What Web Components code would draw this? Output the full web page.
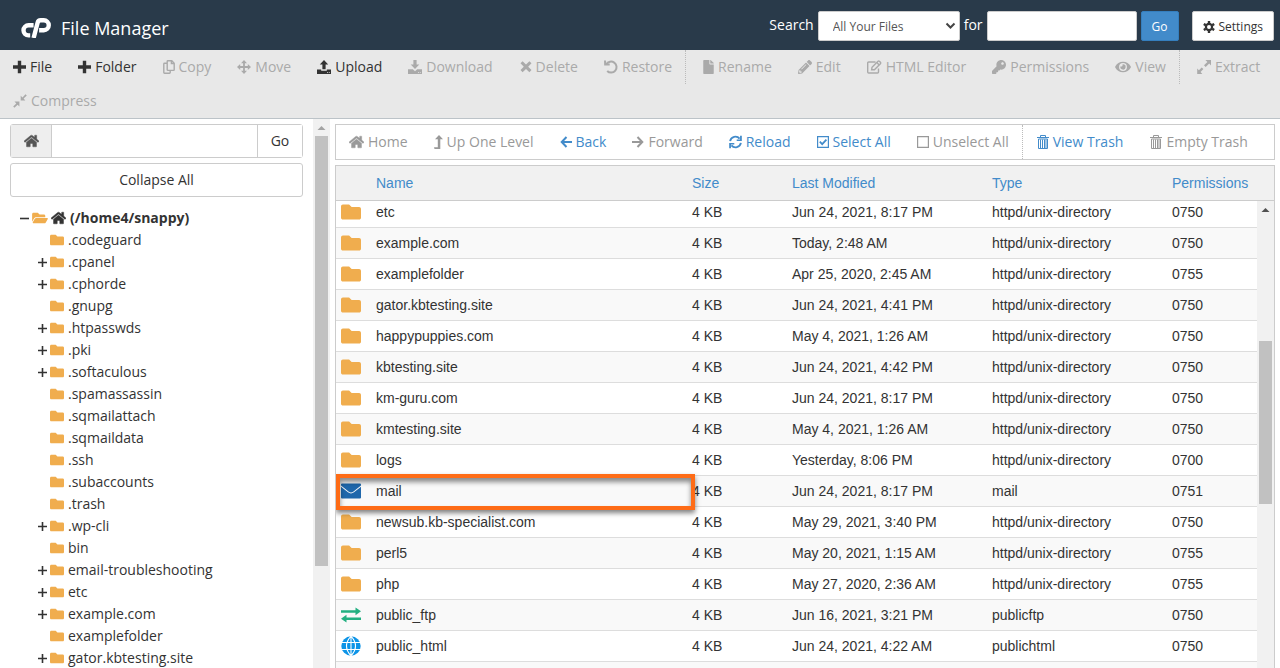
<!DOCTYPE html>
<html lang="en">
<head>
<meta charset="utf-8">
<title>File Manager</title>
<style>
  html, body { height: 100%; }
  body {
    margin: 0;
    overflow: hidden;
    background: #fff;
    color: #333;
    font: 14px/20px "Open Sans", sans-serif;
  }
</style>
</head>
<body>
<file-manager>
  <fm-header slot="header"></fm-header>
  <action-bar slot="actions" label="File actions">
    <tool-item icon="plus">File</tool-item>
    <tool-item icon="plus">Folder</tool-item>
    <tool-item icon="copy" disabled>Copy</tool-item>
    <tool-item icon="move" disabled>Move</tool-item>
    <tool-item icon="upload">Upload</tool-item>
    <tool-item icon="download" disabled>Download</tool-item>
    <tool-item icon="times" disabled>Delete</tool-item>
    <tool-item icon="undo" disabled divider>Restore</tool-item>
    <tool-item icon="file" disabled>Rename</tool-item>
    <tool-item icon="pencil" disabled>Edit</tool-item>
    <tool-item icon="edit" disabled>HTML Editor</tool-item>
    <tool-item icon="key" disabled>Permissions</tool-item>
    <tool-item icon="eye" disabled divider>View</tool-item>
    <tool-item icon="expand" disabled>Extract</tool-item>
    <tool-item icon="compress" disabled>Compress</tool-item>
  </action-bar>
  <folder-tree slot="tree"></folder-tree>
  <action-bar slot="nav" label="Navigation" boxed>
    <tool-item icon="home" disabled>Home</tool-item>
    <tool-item icon="level-up" disabled>Up One Level</tool-item>
    <tool-item icon="arrow-left" link>Back</tool-item>
    <tool-item icon="arrow-right" disabled>Forward</tool-item>
    <tool-item icon="sync" link>Reload</tool-item>
    <tool-item icon="check-square" link>Select All</tool-item>
    <tool-item icon="square" disabled divider>Unselect All</tool-item>
    <tool-item icon="trash" link>View Trash</tool-item>
    <tool-item icon="trash" disabled>Empty Trash</tool-item>
  </action-bar>
  <file-table slot="files"></file-table>
</file-manager>

<script>
// name: [width, height, viewBox, markup]
const ICONS = {
  "plus": [13, 14, "0 0 13 14", '<path d="M4.8.8h3.4v4.500h4.800v3.400H8.200v4.500H4.800V8.700H0V5.300h4.800z"/>'],
  "copy": [12, 14, "0 0 12 14", '<path d="M4.200 3.200H1.500Q.8 3.200.8 3.900v8.600q0 .7.7.7h5q.7 0 .7-.7v-2M4.800.8h4l2.400 2.400v6.500q0 .7-.7.7H4.900q-.7 0-.7-.7V1.500q0-.7.6-.7zM8.400.8v2.800h2.800" fill="none" stroke="currentColor" stroke-width="1.400"/>'],
  "move": [14, 14, "0 0 14 14", '<path d="M7 0l3 3.200H7.900v2.900h2.900V4L14 7l-3.200 3V7.900H7.900v2.900H10L7 14l-3-3.200h2.100V7.900H3.200V10L0 7l3.200-3v2.100h2.900V3.200H4z"/>'],
  "upload": [14, 14, "0 0 14 14", '<path d="M7 0l4.200 4.500H8.600v4.700H5.400V4.500H2.800zM0 9.500h4.200v1.200h5.600V9.500H14V14H0zM10 12v.8h1V12zm1.800 0v.8h1V12z" fill-rule="evenodd"/>'],
  "download": [14, 14, "0 0 14 14", '<path d="M5.400 0h3.200v4.500h2.700L7 9 2.700 4.500h2.700zM0 9.300h4.800L7 11.300l2.200-2H14V14H0zM10 12v.8h1V12zm1.800 0v.8h1V12z" fill-rule="evenodd"/>'],
  "times": [13, 14, "0 0 13 14", '<path d="M3.600 1.200L7 4.500l3.400-3.300 2.100 2.100-3.300 3.400 3.300 3.400-2.100 2.100L7 8.900l-3.400 3.300-2.100-2.100 3.300-3.400-3.300-3.400z"/>'],
  "undo": [14, 14, "0 0 14 14", '<path d="M2.300 4.300A5.500 5.500 0 1 1 3.200 11" fill="none" stroke="currentColor" stroke-width="2"/><path d="M0 .4l2 .1.200 3h3.500v2H.2z"/>'],
  "file": [11, 14, "0 0 384 512", '<path d="M224 136V0H24C10.700 0 0 10.700 0 24v464c0 13.300 10.700 24 24 24h336c13.300 0 24-10.700 24-24V160H248c-13.200 0-24-10.800-24-24zm160-14.100v6.100H256V0h6.100c6.400 0 12.500 2.500 17 7l97.900 98c4.500 4.500 7 10.600 7 16.900z"/>'],
  "pencil": [14, 14, "0 0 512 512", '<path d="M497.900 142.100l-46.100 46.100c-4.700 4.700-12.300 4.700-17 0l-111-111c-4.700-4.700-4.700-12.300 0-17l46.100-46.100c18.700-18.700 49.100-18.700 67.900 0l60.100 60.100c18.800 18.700 18.800 49.100 0 67.900zM284.200 99.800L21.600 362.400.4 483.900c-2.900 16.400 11.400 30.600 27.800 27.800l121.500-21.300 262.600-262.600c4.700-4.700 4.700-12.300 0-17l-111-111c-4.800-4.700-12.400-4.700-17.100 0zM124.100 339.900c-5.500-5.500-5.500-14.300 0-19.800l154-154c5.500-5.500 14.300-5.500 19.800 0s5.500 14.300 0 19.800l-154 154c-5.500 5.500-14.300 5.500-19.800 0zM88 424h48v36.300l-64.500 11.300-31.100-31.100L51.700 376H88v48z"/>'],
  "edit": [15, 14, "0 0 15 14", '<path d="M8.500 2H1.700q-1 0-1 1v9q0 1 1 1h8.800q1 0 1-1V8.500M4.600 9.800l.4-2.500 6-6q.7-.6 1.400 0l1 1q.6.700 0 1.400l-6 6zM9.800 2.500l2.400 2.400" fill="none" stroke="currentColor" stroke-width="1.400"/>'],
  "key": [14, 14, "0 0 512 512", '<path d="M512 176C512 273.200 433.200 352 336 352c-11.200 0-22.200-1.100-32.800-3.100l-24 27A24 24 0 0 1 261.200 384H224v40c0 13.300-10.700 24-24 24h-40v40c0 13.300-10.700 24-24 24H24c-13.300 0-24-10.700-24-24v-78c0-6.400 2.500-12.500 7-17l161.800-161.800C163.100 213.800 160 195.300 160 176 160 78.800 238.800 0 336 0c97.500 0 176 78.500 176 176zM336 128c0 26.500 21.500 48 48 48s48-21.500 48-48-21.500-48-48-48-48 21.500-48 48z"/>'],
  "eye": [16, 14, "0 0 576 512", '<path d="M572.500 241.400C518.300 135.600 410.900 64 288 64S57.700 135.600 3.500 241.400a32.400 32.400 0 0 0 0 29.200C57.700 376.400 165.100 448 288 448s230.300-71.600 284.500-177.400a32.400 32.400 0 0 0 0-29.200zM288 400a144 144 0 1 1 144-144 143.900 143.900 0 0 1-144 144zm0-240a95.300 95.300 0 0 0-25.300 3.800 47.900 47.900 0 0 1-66.900 66.900A95.800 95.800 0 1 0 288 160z"/>'],
  "expand": [14, 14, "0 0 14 14", '<path d="M8.400 0H14v5.400l-1.800-1.800-3.500 3.300L7 5.200l3.400-3.300zM.2 8.500l1.700 1.700 2.800-2.800 1.700 1.700-2.800 2.800L5.300 14H.2z"/>'],
  "compress": [14, 14, "0 0 14 14", '<path d="M12.500.2l1.300 1.300-3.200 3 1.700 1.900H7.700V1.700l1.800 1.700zM1.500 7.600h4.900v4.800l-1.800-1.700-3.200 3.100L.2 12.600l3.100-3.200z"/>'],
  "home": [15, 14, "0 0 576 512", '<path d="M280.400 148.300L96 300.100V464a16 16 0 0 0 16 16l112.100-.3a16 16 0 0 0 15.900-16V368a16 16 0 0 1 16-16h64a16 16 0 0 1 16 16v95.600a16 16 0 0 0 16 16.100L464 480a16 16 0 0 0 16-16V300L295.700 148.300a12.200 12.200 0 0 0-15.300 0zM571.600 251.500L488 182.600V44.100a12 12 0 0 0-12-12h-56a12 12 0 0 0-12 12v72.600L318.500 43a48 48 0 0 0-61 0L4.300 251.500a12 12 0 0 0-1.600 16.900l25.500 31A12 12 0 0 0 45.200 301l235.200-193.700a12.200 12.200 0 0 1 15.300 0L530.900 301a12 12 0 0 0 16.900-1.600l25.500-31a12 12 0 0 0-1.700-16.900z" stroke="currentColor" stroke-width="16"/>'],
  "level-up": [9, 14, "0 0 9 14", '<path d="M5 0l4 4.300H6.300V14H.5L0 12.200h3.800V4.300H1z"/>'],
  "arrow-left": [12, 14, "0 0 12 14", '<path d="M6.500 2L1.700 7l4.800 5M2 7h10" fill="none" stroke="currentColor" stroke-width="2"/>'],
  "arrow-right": [12, 14, "0 0 12 14", '<path d="M5.500 2l4.800 5-4.800 5M10 7H0" fill="none" stroke="currentColor" stroke-width="2"/>'],
  "sync": [13, 14, "0 0 14 14", '<path d="M1.200 6A5.800 5.800 0 0 1 11.400 3.400M12.800 8A5.800 5.800 0 0 1 2.600 10.600" fill="none" stroke="currentColor" stroke-width="2"/><path d="M13.800.3v5.600H8.300V4.200h3.600V.3zM.2 13.700V8.100h5.500v1.700H2.100v3.900z"/>'],
  "check-square": [12, 14, "0 0 12 14", '<path d="M.6 1.600h10.800v10.800H.6z" fill="none" stroke="currentColor" stroke-width="1.200"/><path d="M2.800 6.700l2.400 2.400L9.400 4.700" fill="none" stroke="currentColor" stroke-width="1.800"/>'],
  "square": [12, 14, "0 0 12 14", '<path d="M.6 1.600h10.800v10.800H.6z" fill="none" stroke="currentColor" stroke-width="1.200"/>'],
  "trash": [13, 14, "0 0 13 14", '<path d="M1 2.500h12M4.500 2V.5h5V2M2.500 4v9.500h9V4zM4.500 4.500v8.500M6.500 4.500v8.500M8.500 4.500v8.500M10 4.500v8.500" fill="none" stroke="currentColor"/>'],
  "folder": [14, 14, "0 0 512 512", '<path d="M464 128H272l-64-64H48C21.500 64 0 85.500 0 112v288c0 26.500 21.500 48 48 48h416c26.500 0 48-21.500 48-48V176c0-26.500-21.500-48-48-48z"/>'],
  "folder-open": [16, 14, "0 0 576 512", '<path d="M572.700 292.100L500.300 416.200A64 64 0 0 1 445 448H45c-18.500 0-30-20.100-20.700-36.100l72.400-124.100A64 64 0 0 1 152 256h400c18.500 0 30 20.100 20.700 36.100zM152 224h328v-48c0-26.500-21.500-48-48-48H272l-64-64H48C21.500 64 0 85.500 0 112v278l69.100-118.400C86.200 242.300 118 224 152 224z"/>'],
  "tree-plus": [9, 14, "0 0 9 14", '<path d="M0 7.500h9M4.500 3v9" fill="none" stroke="currentColor" stroke-width="1.600"/>'],
  "tree-minus": [9, 14, "0 0 9 14", '<path d="M0 7.500h9" fill="none" stroke="currentColor" stroke-width="1.600"/>'],
  "cog": [12, 12, "0 0 12 12", '<circle cx="6" cy="6" r="3.100" fill="none" stroke="currentColor" stroke-width="2.200"/><path d="M6 0v2.200M6 9.800V12M.8 3l1.900 1.100M9.300 7.900L11.200 9M.8 9l1.900-1.100M9.300 4.100L11.200 3" stroke="currentColor" stroke-width="2.400"/>'],
  "big-folder": [20, 20, "0 0 512 512", '<path d="M464 128H272l-64-64H48C21.500 64 0 85.500 0 112v288c0 26.500 21.500 48 48 48h416c26.500 0 48-21.500 48-48V176c0-26.500-21.500-48-48-48z"/>'],
  "mail": [20, 20, "0 0 20 20", '<path d="M1 2.500h18q1 0 1 1v.9l-7.500 6q-2.500 2-5 0L0 4.400v-.9q0-1 1-1zM0 5.800l7 5.500q3 2.300 6 0l7-5.500v10.700q0 1-1 1H1q-1 0-1-1z"/>'],
  "exchange": [20, 20, "0 0 20 20", '<path d="M0 5.200h14.500V2.400L20 6.300l-5.500 3.900V7.700H0zM20 12.500H5.500V9.800L0 13.700l5.500 3.900v-2.600H20z"/>'],
  "globe": [20, 20, "0 0 20 20", '<circle cx="10" cy="10" r="9.700"/><path d="M0 6.500h20M0 13.500h20M10 0v20M10 .2Q1 10 10 19.800M10 .2Q19 10 10 19.800" fill="none" stroke="#fff" stroke-width="1.100"/>']
};

class FmIcon extends HTMLElement {
  constructor() {
    super();
    this.attachShadow({ mode: "open" });
  }

  connectedCallback() {
    const [width, height, box, body] = ICONS[this.getAttribute("name")];
    this.shadowRoot.innerHTML = `
      <style>
        :host { display: inline-flex; flex: none; }
        svg { display: block; fill: currentColor; }
      </style>
      <svg width="${width}" height="${height}" viewBox="${box}" aria-hidden="true">${body}</svg>
    `;
  }
}

class ToolItem extends HTMLElement {
  constructor() {
    super();
    this.attachShadow({ mode: "open" });
  }

  connectedCallback() {
    const disabled = this.hasAttribute("disabled") ? "disabled" : "";
    this.shadowRoot.innerHTML = `
      <style>
        :host { display: block; }
        :host([divider]) { border-right: 1px dotted #bbb; margin-right: 4px; }
        :host([boxed][divider]) { margin-right: 0; }
        button {
          display: flex;
          align-items: center;
          gap: 4px;
          height: 34px;
          padding: 0 13px;
          border: 0;
          background: none;
          color: #333;
          font: inherit;
          white-space: nowrap;
          cursor: pointer;
        }
        :host([link]) button { color: #428bca; }
        button:disabled { color: #aaa; cursor: default; }
        :host([boxed]) button:disabled { color: #999; }
      </style>
      <button type="button" ${disabled}>
        <fm-icon name="${this.getAttribute("icon")}"></fm-icon><slot></slot>
      </button>
    `;
  }
}

class ActionBar extends HTMLElement {
  constructor() {
    super();
    this.attachShadow({ mode: "open" });
  }

  connectedCallback() {
    this.setAttribute("role", "toolbar");
    this.setAttribute("aria-label", this.getAttribute("label"));
    this.shadowRoot.innerHTML = `
      <style>
        :host {
          display: flex;
          flex-wrap: wrap;
          background: #e8e8e8;
          border-bottom: 1px solid #bcc3c8;
        }
        :host([boxed]) { background: #fff; border: 1px solid #ccc; }
      </style>
      <slot></slot>
    `;
    if (this.hasAttribute("boxed")) {
      this.querySelectorAll("tool-item").forEach((item) => item.setAttribute("boxed", ""));
    }
  }
}

class FmHeader extends HTMLElement {
  constructor() {
    super();
    this.attachShadow({ mode: "open" });
  }

  connectedCallback() {
    this.shadowRoot.innerHTML = `
      <style>
        :host {
          display: flex;
          justify-content: space-between;
          height: 50px;
          padding: 0 6px 0 21px;
          background: #293a4a;
          color: #fff;
        }
        .brand { display: flex; align-items: center; gap: 10px; padding-top: 6px; }
        h1 { margin: 0; font-size: 18px; line-height: 24px; font-weight: 400; }
        form { display: flex; align-items: center; gap: 4px; padding-top: 2px; }
        label { padding-bottom: 2px; }
        select, input, button {
          box-sizing: border-box;
          height: 30px;
          border: 1px solid #ccc;
          border-radius: 2px;
          background: #fff;
          color: #333;
          font: 12px/18px "Open Sans", sans-serif;
        }
        .picker { display: grid; align-items: center; }
        .picker > * { grid-area: 1 / 1; }
        .picker svg { justify-self: end; margin-right: 4px; pointer-events: none; }
        select { width: 142px; padding: 2px 14px 0; color: #555; appearance: none; }
        input { width: 150px; padding: 4px 8px; }
        button { display: flex; align-items: center; gap: 4px; padding: 2px 10px 0; }
        .go { border-color: #357ebd; background: #428bca; color: #fff; }
        .settings { margin-left: 9px; }
      </style>
      <div class="brand">
        <svg width="30" height="20" viewBox="0 0 30 20" aria-hidden="true" fill="none" stroke="#fff" stroke-width="4.400">
          <path d="M12.600 7.200H7.600a5.100 5.100 0 0 0 0 10.200h1.600"/>
          <path d="M12.600 20L16.600 4.700q.6-2.400 3-2.400h3.200a4.900 4.900 0 0 1 0 9.900h-4.700"/>
        </svg>
        <h1>File Manager</h1>
      </div>
      <form onsubmit="return false">
        <label for="scope">Search</label>
        <div class="picker">
          <select id="scope">
            <option>All Your Files</option>
            <option>Only public_html</option>
            <option>Current Directory</option>
          </select>
          <svg width="11" height="8" viewBox="0 0 11 8" aria-hidden="true">
            <path d="M1.500 1.500l4 4 4-4" fill="none" stroke="#444" stroke-width="2"/>
          </svg>
        </div>
        <label for="query">for</label>
        <input id="query" type="text">
        <button class="go">Go</button>
        <button class="settings" type="button"><fm-icon name="cog"></fm-icon>Settings</button>
      </form>
    `;
  }
}

// Scrollbar track; --thumb-top and --thumb-height place the thumb below the arrow
class ScrollRail extends HTMLElement {
  constructor() {
    super();
    this.attachShadow({ mode: "open" });
    this.shadowRoot.innerHTML = `
      <style>
        :host {
          display: block;
          flex: none;
          width: 17px;
          background: #f1f1f1;
          color: #a3a3a3;
        }
        svg { display: block; height: 17px; width: 17px; fill: currentColor; }
        .thumb {
          height: var(--thumb-height);
          margin: var(--thumb-top, 0) 2px 0;
          background: #c1c1c1;
        }
      </style>
      <svg viewBox="0 0 17 17" aria-hidden="true"><path d="M8.500 7l4 4h-8z"/></svg>
      <div class="thumb"></div>
    `;
  }
}

const FOLDERS = [
  [".codeguard", false], [".cpanel", true], [".cphorde", true], [".gnupg", false],
  [".htpasswds", true], [".pki", true], [".softaculous", true], [".spamassassin", false],
  [".sqmailattach", false], [".sqmaildata", false], [".ssh", false], [".subaccounts", false],
  [".trash", false], [".wp-cli", true], ["bin", false], ["email-troubleshooting", true],
  ["etc", true], ["example.com", true], ["examplefolder", false], ["gator.kbtesting.site", true]
];

class FolderTree extends HTMLElement {
  constructor() {
    super();
    this.attachShadow({ mode: "open" });
  }

  connectedCallback() {
    this.shadowRoot.innerHTML = `
      <style>
        :host { display: flex; min-height: 0; overflow: hidden; }
        .panel { flex: 1; padding: 5px 10px 0; overflow: hidden; }
        form {
          display: grid;
          grid-template-columns: 41px 1fr 45px;
          height: 32px;
          border: 1px solid #ccc;
          border-radius: 3px;
        }
        form label {
          display: grid;
          place-items: center;
          background: #eee;
          color: #555;
          border-right: 1px solid #ccc;
        }
        input { min-width: 0; border: 0; padding: 0 12px; font: inherit; }
        button { background: #fff; color: #333; font: inherit; border: 0; padding: 0; }
        form button { border-left: 1px solid #ccc; }
        .collapse {
          width: 100%;
          height: 34px;
          margin: 5px 0 10px;
          border: 1px solid #ccc;
          border-radius: 3px;
        }
        ul { list-style: none; margin: 0; padding: 0; }
        ul ul { padding-left: 28px; }
        .row { display: flex; align-items: center; gap: 3px; height: 22px; white-space: nowrap; }
        .root { padding-left: 10px; font-weight: 700; }
        .toggle { flex: none; width: 9px; }
        .toggle fm-icon { display: block; }
        .folder { color: #f0ad4e; }
        a { display: flex; align-items: center; gap: 4px; color: #333; text-decoration: none; }
        scroll-rail { --thumb-height: 430px; }
      </style>
      <div class="panel">
        <form onsubmit="return false">
          <label for="path" aria-label="Path"><fm-icon name="home"></fm-icon></label>
          <input id="path" type="text">
          <button>Go</button>
        </form>
        <button class="collapse" type="button">Collapse All</button>
        <ul>
          <li>
            <div class="row root">
              <span class="toggle"><fm-icon name="tree-minus"></fm-icon></span>
              <fm-icon class="folder" name="folder-open"></fm-icon>
              <a href="#"><fm-icon name="home"></fm-icon>(/home4/snappy)</a>
            </div>
            <ul>
              ${FOLDERS.map(([name, nested]) => `
              <li class="row">
                <span class="toggle">${nested ? '<fm-icon name="tree-plus"></fm-icon>' : ""}</span>
                <a href="#"><fm-icon class="folder" name="folder"></fm-icon>${name}</a>
              </li>`).join("")}
            </ul>
          </li>
        </ul>
      </div>
      <scroll-rail></scroll-rail>
    `;
  }
}

const DIR = "httpd/unix-directory";
const FILES = [
  ["etc", "Jun 24, 2021, 8:17 PM", DIR, "0750"],
  ["example.com", "Today, 2:48 AM", DIR, "0750"],
  ["examplefolder", "Apr 25, 2020, 2:45 AM", DIR, "0755"],
  ["gator.kbtesting.site", "Jun 24, 2021, 4:41 PM", DIR, "0750"],
  ["happypuppies.com", "May 4, 2021, 1:26 AM", DIR, "0750"],
  ["kbtesting.site", "Jun 24, 2021, 4:42 PM", DIR, "0750"],
  ["km-guru.com", "Jun 24, 2021, 8:17 PM", DIR, "0750"],
  ["kmtesting.site", "May 4, 2021, 1:26 AM", DIR, "0750"],
  ["logs", "Yesterday, 8:06 PM", DIR, "0700"],
  ["mail", "Jun 24, 2021, 8:17 PM", "mail", "0751"],
  ["newsub.kb-specialist.com", "May 29, 2021, 3:40 PM", DIR, "0750"],
  ["perl5", "May 20, 2021, 1:15 AM", DIR, "0755"],
  ["php", "May 27, 2020, 2:36 AM", DIR, "0755"],
  ["public_ftp", "Jun 16, 2021, 3:21 PM", "publicftp", "0750"],
  ["public_html", "Jun 24, 2021, 4:22 AM", "publichtml", "0750"]
];
const TYPE_ICONS = {
  mail: ["mail", "#1f67ab"],
  publicftp: ["exchange", "#23b081"],
  publichtml: ["globe", "#0d94e7"]
};

class FileTable extends HTMLElement {
  constructor() {
    super();
    this.attachShadow({ mode: "open" });
  }

  connectedCallback() {
    const cols = `
      <colgroup>
        <col class="icon"><col><col class="size"><col class="date"><col class="type"><col class="perms">
      </colgroup>`;
    this.shadowRoot.innerHTML = `
      <style>
        :host {
          display: flex;
          flex-direction: column;
          min-height: 0;
          border: 1px solid #ccc;
          border-bottom: 0;
          font-family: "Liberation Sans", Arial, sans-serif;
        }
        .head { padding-right: 17px; background: #f1f1f1; border-bottom: 1px solid #ccc; }
        table { width: 100%; table-layout: fixed; border-collapse: separate; border-spacing: 0; }
        .icon { width: 35px; }
        .size { width: 100px; }
        .date { width: 200px; }
        .type { width: 180px; }
        .perms { width: 90px; }
        th, td { padding: 0 5px; text-align: left; font-weight: 400; white-space: nowrap; }
        th { height: 34px; }
        th a { color: #428bca; text-decoration: none; }
        td { height: 30px; border-bottom: 1px solid #ddd; }
        tr:nth-child(even) td { background: #f9f9f9; }
        fm-icon { display: block; }
        .body { display: flex; flex: 1; min-height: 0; }
        .scroll { flex: 1; min-width: 0; overflow: hidden; }
        .marked { position: relative; }
        .marked::after {
          content: "";
          position: absolute;
          inset: -2px -8px -4px -35px;
          border: 4px solid #fe6c17;
          box-shadow: 0 3px 5px rgba(0,0,0,.5), inset 0 4px 5px rgba(0,0,0,.45);
          pointer-events: none;
        }
        scroll-rail { color: #505050; --thumb-top: 123px; --thumb-height: 163px; }
      </style>
      <div class="head">
        <table>
          ${cols}
          <thead>
            <tr>
              <th></th>
              <th><a href="#">Name</a></th>
              <th><a href="#">Size</a></th>
              <th><a href="#">Last Modified</a></th>
              <th><a href="#">Type</a></th>
              <th><a href="#">Permissions</a></th>
            </tr>
          </thead>
        </table>
      </div>
      <div class="body">
        <div class="scroll">
          <table>
            ${cols}
            <tbody>
              ${FILES.map(([name, date, type, perms]) => {
                const [icon, color] = TYPE_ICONS[type] || ["big-folder", "#f0ad4e"];
                return `
              <tr>
                <td style="color: ${color}"><fm-icon name="${icon}"></fm-icon></td>
                <td class="${name === "mail" ? "marked" : ""}">${name}</td>
                <td>4 KB</td>
                <td>${date}</td>
                <td>${type}</td>
                <td>${perms}</td>
              </tr>`;
              }).join("")}
              <tr><td></td><td></td><td></td><td></td><td></td><td></td></tr>
            </tbody>
          </table>
        </div>
        <scroll-rail></scroll-rail>
      </div>
    `;
    // list is scrolled a little past the top of the first row
    this.shadowRoot.querySelector(".scroll").scrollTop = 4;
  }
}

class FileManager extends HTMLElement {
  constructor() {
    super();
    this.attachShadow({ mode: "open" });
  }

  connectedCallback() {
    this.shadowRoot.innerHTML = `
      <style>
        :host { display: flex; flex-direction: column; height: 100%; }
        .main { display: grid; grid-template-columns: 330px minmax(0, 1fr); flex: 1; min-height: 0; }
        main { display: flex; flex-direction: column; gap: 5px; min-height: 0; padding: 5px 5px 0; }
        aside { display: grid; min-height: 0; }
        ::slotted(file-table) { flex: 1; }
      </style>
      <slot name="header"></slot>
      <slot name="actions"></slot>
      <div class="main">
        <aside><slot name="tree"></slot></aside>
        <main>
          <slot name="nav"></slot>
          <slot name="files"></slot>
        </main>
      </div>
    `;
  }
}

customElements.define("fm-icon", FmIcon);
customElements.define("scroll-rail", ScrollRail);
customElements.define("tool-item", ToolItem);
customElements.define("action-bar", ActionBar);
customElements.define("fm-header", FmHeader);
customElements.define("folder-tree", FolderTree);
customElements.define("file-manager", FileManager);
// last, so the list already has its final height when it scrolls
customElements.define("file-table", FileTable);
</script>
</body>
</html>
